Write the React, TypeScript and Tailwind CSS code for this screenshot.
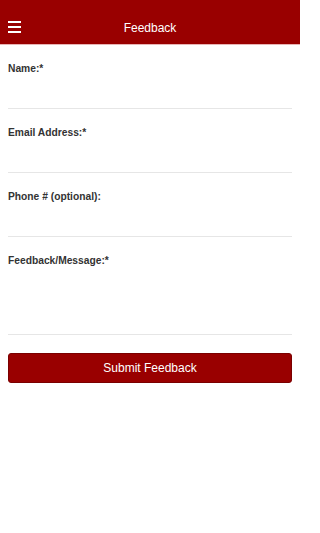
import React from 'react';

const fields = [
  { label: 'Name:*', height: 'h-[64px]' },
  { label: 'Email Address:*', height: 'h-[64px]' },
  { label: 'Phone # (optional):', height: 'h-[64px]' },
  { label: 'Feedback/Message:*', height: 'h-[98px]' },
];

export default function App() {
  return (
    <div className="min-h-[533px] w-[300px] bg-white font-['Liberation_Sans',Arial,sans-serif]">
      {/* Header */}
      <div className="relative flex h-[45px] items-start justify-center border-b border-[#e8b4b4] bg-[#990000] pt-[20px]">
        <button className="absolute left-[8px] top-[21px] flex h-[12px] w-[13px] flex-col justify-between">
          <span className="block h-[2px] w-full bg-white" />
          <span className="block h-[2px] w-full bg-white" />
          <span className="block h-[2px] w-full bg-white" />
        </button>
        <h1 className="text-[12px] leading-[16px] text-white">Feedback</h1>
      </div>

      {/* Form */}
      <div className="px-2">
        {fields.map((f) => (
          <div key={f.label} className={`${f.height} border-b border-[#e6e6e6] pt-[17px]`}>
            <label className="block text-[10.25px] font-bold leading-[14px] text-[#333333]">{f.label}</label>
          </div>
        ))}
        <button className="mt-[18px] h-[30px] w-full rounded-[3px] border border-[#7a0000] bg-[#990000] text-[12px] text-white">
          Submit Feedback
        </button>
      </div>
    </div>
  );
}
